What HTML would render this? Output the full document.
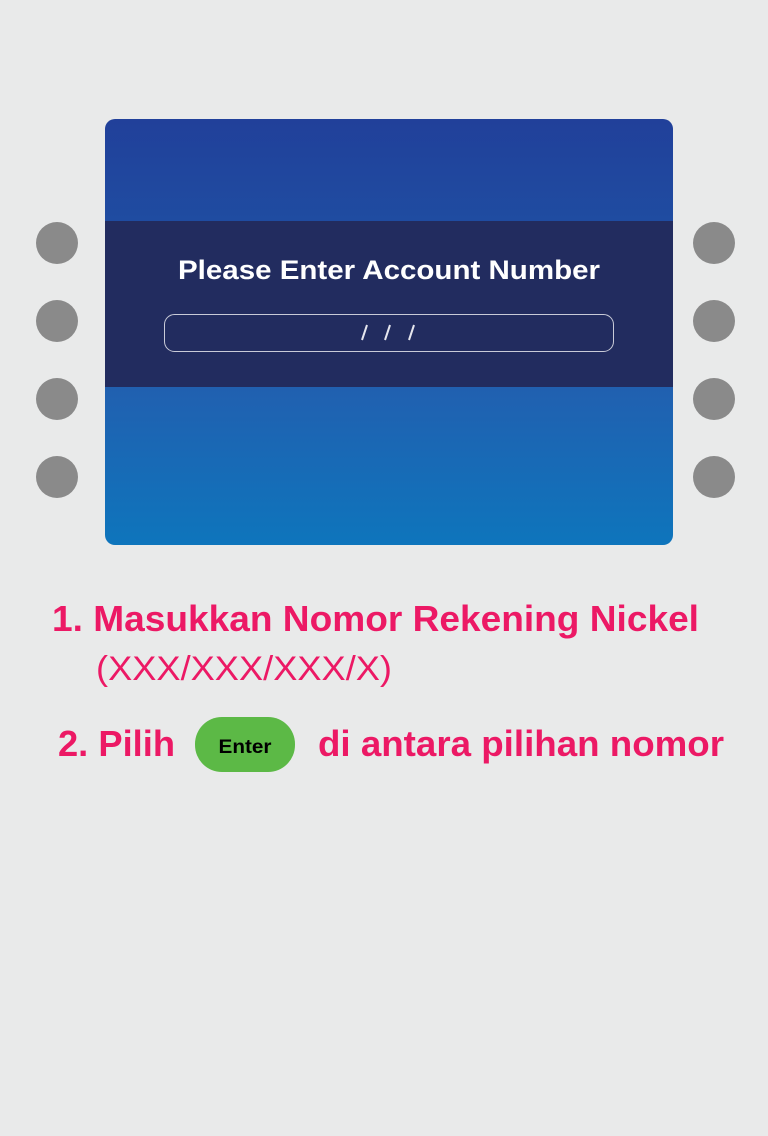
<!DOCTYPE html>
<html><head><meta charset="utf-8"><style>
html,body{margin:0;padding:0;background:#e9eaea;width:768px;height:1136px;overflow:hidden}
</style></head><body>
<svg width="768" height="1136" xmlns="http://www.w3.org/2000/svg" style="display:block">
<defs>
<linearGradient id="t" x1="0" y1="0" x2="0" y2="1"><stop offset="0" stop-color="#21409a"/><stop offset="1" stop-color="#1f4ca1"/></linearGradient>
<linearGradient id="b" x1="0" y1="0" x2="0" y2="1"><stop offset="0" stop-color="#2160b0"/><stop offset="1" stop-color="#0e75bc"/></linearGradient>
<clipPath id="c"><rect x="105" y="119" width="568" height="426" rx="10"/></clipPath>
</defs>
<g clip-path="url(#c)">
<rect x="105" y="119" width="568" height="102" fill="url(#t)"/>
<rect x="105" y="221" width="568" height="166" fill="#222c5f"/>
<rect x="105" y="387" width="568" height="158" fill="url(#b)"/>
</g>
<text x="389" y="279" text-anchor="middle" fill="#fff" font-family="Liberation Sans, sans-serif" font-weight="bold" font-size="27" textLength="422" lengthAdjust="spacingAndGlyphs">Please Enter Account Number</text>
<rect x="164.5" y="314.5" width="449" height="37" rx="10" fill="none" stroke="#c9cbd8" stroke-width="1"/>
<g stroke="#e6e6ee" stroke-width="2"><line x1="367" y1="325" x2="362" y2="340"/><line x1="390" y1="325" x2="385" y2="340"/><line x1="414" y1="325" x2="409" y2="340"/></g>
<g fill="#8a8a8a">
<circle cx="57" cy="243" r="21"/><circle cx="57" cy="321" r="21"/><circle cx="57" cy="399" r="21"/><circle cx="57" cy="477" r="21"/>
<circle cx="714" cy="243" r="21"/><circle cx="714" cy="321" r="21"/><circle cx="714" cy="399" r="21"/><circle cx="714" cy="477" r="21"/>
</g>
<g fill="#ec1965" font-family="Liberation Sans, sans-serif">
<text x="52" y="631" font-weight="bold" font-size="36" textLength="647" lengthAdjust="spacingAndGlyphs">1. Masukkan Nomor Rekening Nickel</text>
<text x="96" y="680" font-size="34" textLength="296" lengthAdjust="spacingAndGlyphs">(XXX/XXX/XXX/X)</text>
<text x="58" y="756" font-weight="bold" font-size="36" textLength="117" lengthAdjust="spacingAndGlyphs">2. Pilih</text>
<text x="318" y="756" font-weight="bold" font-size="36" textLength="406" lengthAdjust="spacingAndGlyphs">di antara pilihan nomor</text>
</g>
<rect x="195" y="717" width="100" height="55" rx="27" fill="#5cb946"/>
<text x="245" y="753" text-anchor="middle" fill="#000" font-family="Liberation Sans, sans-serif" font-weight="bold" font-size="19" textLength="53" lengthAdjust="spacingAndGlyphs">Enter</text>
</svg>
</body></html>
